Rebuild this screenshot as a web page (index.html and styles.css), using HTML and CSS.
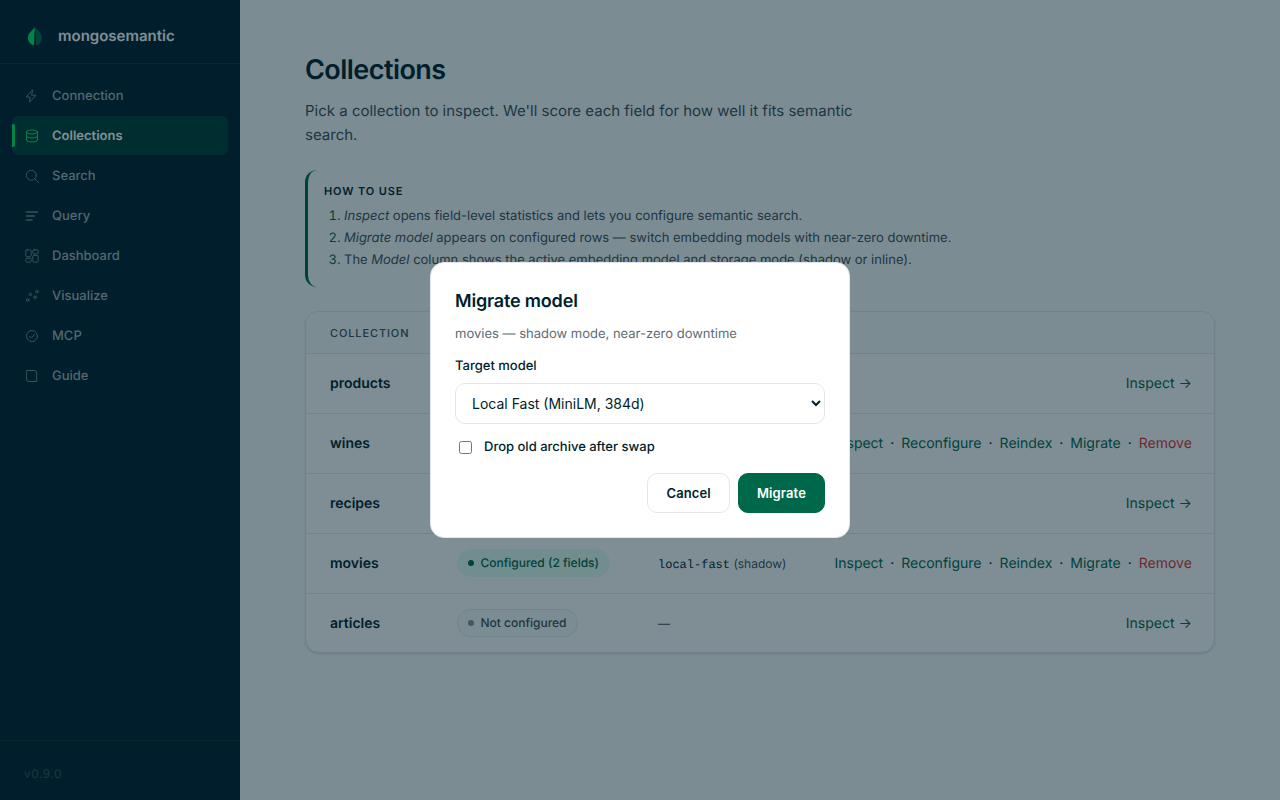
FILE: index.html
```html
<!DOCTYPE html>
<html lang="en">
<head>
<meta charset="utf-8">
<meta name="viewport" content="width=device-width, initial-scale=1">
<title>Collections – mongosemantic</title>
<link rel="stylesheet" href="styles.css">
</head>
<body>
<div class="app">
  <aside class="sidebar">
    <div class="brand">
      <svg class="brand-mark" viewBox="0 0 22 22" aria-hidden="true">
        <path d="M11 2C10.500 4 4 7 4 13c0 4 2.800 6.500 6 7.400L10.400 10z" fill="#00ed64"/>
        <path d="M11 2c.5 2 7 5 7 11 0 4-2.800 6.500-6 7.400L11.600 10z" fill="#00684a"/>
      </svg>
      <span class="brand-name">mongosemantic</span>
    </div>
    <nav class="nav">
      <a href="#" class="nav-item"><svg class="icon" viewBox="0 0 16 16"><path d="M8.500 2 2.200 9h4l-.8 5.200L12 7.200H8z"/></svg>Connection</a>
      <a href="#" class="nav-item active" aria-current="page"><svg class="icon" viewBox="0 0 16 16"><ellipse cx="8" cy="4" rx="5.500" ry="2"/><path d="M2.500 4v8c0 1.100 2.500 2 5.500 2s5.500-.9 5.500-2V4M2.500 8c0 1.100 2.500 2 5.500 2s5.500-.9 5.500-2"/></svg>Collections</a>
      <a href="#" class="nav-item"><svg class="icon" viewBox="0 0 16 16"><circle cx="7.300" cy="7.300" r="5"/><path d="m11 11 3.500 3.500"/></svg>Search</a>
      <a href="#" class="nav-item"><svg class="icon" viewBox="0 0 16 16"><path stroke-width="1.500" d="M2.500 4h11M2.500 8h8M2.500 12h5.500"/></svg>Query</a>
      <a href="#" class="nav-item"><svg class="icon" viewBox="0 0 16 16"><rect x="1.800" y="1.800" width="5.400" height="7" rx="1.400"/><rect x="8.800" y="1.800" width="5.400" height="4.200" rx="1.400"/><rect x="1.800" y="10.200" width="5.400" height="4" rx="1.400"/><rect x="8.800" y="7.400" width="5.400" height="6.800" rx="1.400"/></svg>Dashboard</a>
      <a href="#" class="nav-item"><svg class="icon" viewBox="0 0 16 16"><circle cx="3.700" cy="12" r="1.300"/><circle cx="6.400" cy="6.400" r="1.300"/><circle cx="11" cy="9.200" r="1.300"/><circle cx="12.800" cy="3.600" r="1.300"/></svg>Visualize</a>
      <a href="#" class="nav-item"><svg class="icon" viewBox="0 0 16 16"><circle cx="8" cy="8" r="5.500"/><path d="m5.500 8.200 1.800 1.800 3.400-3.600"/></svg>MCP</a>
      <a href="#" class="nav-item"><svg class="icon" viewBox="0 0 16 16"><path d="M2.500 2.500h7.700a2.500 2.500 0 0 1 2.500 2.500v8.500H5A2.500 2.500 0 0 1 2.500 11z"/></svg>Guide</a>
    </nav>
    <div class="version">v0.9.0</div>
  </aside>

  <main class="main">
    <div class="content">
      <h1 class="title">Collections</h1>
      <p class="lead">Pick a collection to inspect. We'll score each field for how well it fits semantic search.</p>

      <section class="howto">
        <h2 class="howto-title">How to use</h2>
        <ol class="howto-list">
          <li><em>Inspect</em> opens field-level statistics and lets you configure semantic search.</li>
          <li><em>Migrate model</em> appears on configured rows — switch embedding models with near-zero downtime.</li>
          <li>The <em>Model</em> column shows the active embedding model and storage mode (shadow or inline).</li>
        </ol>
      </section>

      <div class="card">
        <table class="table">
          <thead>
            <tr><th class="col-name">Collection</th><th class="col-status">Status</th><th class="col-model">Model</th><th></th></tr>
          </thead>
          <tbody>
            <tr>
              <td class="name">products</td>
              <td><span class="pill">Not configured</span></td>
              <td class="model">—</td>
              <td class="actions"><a href="#">Inspect →</a></td>
            </tr>
            <tr>
              <td class="name">wines</td>
              <td><span class="pill ok">Configured (2 fields)</span></td>
              <td class="model"><code>local-fast</code> (shadow)</td>
              <td class="actions"><a href="#">Inspect</a><span class="dot">·</span><a href="#">Reconfigure</a><span class="dot">·</span><a href="#">Reindex</a><span class="dot">·</span><a href="#">Migrate</a><span class="dot">·</span><a href="#" class="danger">Remove</a></td>
            </tr>
            <tr>
              <td class="name">recipes</td>
              <td><span class="pill">Not configured</span></td>
              <td class="model">—</td>
              <td class="actions"><a href="#">Inspect →</a></td>
            </tr>
            <tr>
              <td class="name">movies</td>
              <td><span class="pill ok">Configured (2 fields)</span></td>
              <td class="model"><code>local-fast</code> (shadow)</td>
              <td class="actions"><a href="#">Inspect</a><span class="dot">·</span><a href="#">Reconfigure</a><span class="dot">·</span><a href="#">Reindex</a><span class="dot">·</span><a href="#">Migrate</a><span class="dot">·</span><a href="#" class="danger">Remove</a></td>
            </tr>
            <tr>
              <td class="name">articles</td>
              <td><span class="pill">Not configured</span></td>
              <td class="model">—</td>
              <td class="actions"><a href="#">Inspect →</a></td>
            </tr>
          </tbody>
        </table>
      </div>
    </div>
  </main>
</div>

<div class="overlay">
  <form class="modal" role="dialog" aria-modal="true" aria-labelledby="modal-title">
    <h2 class="modal-title" id="modal-title">Migrate model</h2>
    <p class="modal-sub">movies — shadow mode, near-zero downtime</p>
    <label class="label" for="target">Target model</label>
    <select class="select" id="target">
      <option>Local Fast (MiniLM, 384d)</option>
    </select>
    <label class="check"><input type="checkbox">Drop old archive after swap</label>
    <div class="modal-actions">
      <button type="button" class="btn">Cancel</button>
      <button type="button" class="btn primary">Migrate</button>
    </div>
  </form>
</div>
</body>
</html>
```

FILE: styles.css
```css
* { box-sizing: border-box; }

body {
  margin: 0;
  font-family: Inter, "Liberation Sans", sans-serif;
  font-size: 14px;
  line-height: 24px;
  color: #001e2b;
  background: #f9fbfa;
  text-rendering: geometricPrecision;
}

h1, h2, p, ol { margin: 0; }
a { color: inherit; text-decoration: none; }

.app {
  display: flex;
  min-height: 100vh;
}

.sidebar {
  flex: 0 0 240px;
  display: flex;
  flex-direction: column;
  background: #001e2b;
}

.brand {
  display: flex;
  align-items: center;
  gap: 12px;
  padding: 24px 24px 16px;
  border-bottom: 1px solid #14303c;
  height: 64px;
}
.brand-mark { width: 22px; height: 22px; }
.brand-name {
  font-size: 15px;
  font-weight: 600;
  line-height: 22px;
  color: #fff;
}

.nav {
  display: flex;
  flex-direction: column;
  gap: 1px;
  padding: 12px;
}
.nav-item {
  position: relative;
  display: flex;
  align-items: center;
  gap: 12px;
  padding: 10px 12px 9px;
  border-radius: 6px;
  font-size: 13px;
  font-weight: 500;
  line-height: 20px;
  color: #a6b1b5;
}
.nav-item.active {
  color: #fff;
  font-weight: 600;
  background: #003d32;
}
.nav-item.active::before {
  content: "";
  position: absolute;
  left: 0;
  top: 8px;
  bottom: 8px;
  width: 3px;
  border-radius: 0 2px 2px 0;
  background: #00ed64;
}
.icon {
  width: 16px;
  height: 16px;
  fill: none;
  stroke: currentColor;
  stroke-width: 1;
  stroke-linecap: round;
  stroke-linejoin: round;
  opacity: 0.7;
}
.nav-item.active .icon { stroke: #00ed64; opacity: 1; }

.version {
  margin-top: auto;
  padding: 21px 24px 14px;
  border-top: 1px solid #0c322f;
  font-size: 12px;
  letter-spacing: 0.04em;
  color: #3d4f58;
}

.main {
  flex: 1;
  min-width: 0;
  padding: 52px 48px 48px;
}
.content {
  max-width: 910px;
  margin: 0 auto;
}

.title {
  font-size: 27px;
  font-weight: 600;
  line-height: 36px;
  letter-spacing: -0.02em;
}
.lead {
  max-width: 560px;
  margin-top: 11px;
  font-size: 15px;
  color: #3d4f58;
}

.howto {
  margin-top: 23px;
  padding: 12px 16px 16px;
  border-left: 3px solid #00684a;
  border-radius: 12px;
}
.howto-title {
  font-size: 11px;
  font-weight: 600;
  line-height: 18px;
  letter-spacing: 0.08em;
  text-transform: uppercase;
}
.howto-list {
  margin-top: 5px;
  padding-left: 20px;
  font-size: 13px;
  line-height: 22px;
  color: #3d4f58;
}
.howto-list ::marker { color: #00684a; }

.card {
  margin-top: 24px;
  border: 1px solid #e1e7ea;
  border-radius: 14px;
  background: #fff;
  box-shadow: 0 1px 2px rgba(0, 30, 43, 0.16);
  overflow: hidden;
}
.table {
  width: 100%;
  border-collapse: collapse;
}
.table th {
  height: 41px;
  padding: 2px 24px 0;
  font-size: 11px;
  font-weight: 500;
  letter-spacing: 0.08em;
  text-align: left;
  text-transform: uppercase;
  color: #3d4f58;
  background: #f9fbfa;
}
.table th, .table td { border-bottom: 1px solid #e1e7ea; }
.table tr:last-child td { border-bottom: 0; }
.table td {
  height: 60px;
  padding: 0 24px;
}
.table tr:last-child td { height: 59px; }
.table .col-name { width: 127px; }
.table .name,
.table .model,
.table .actions { padding-top: 2px; }
.name { font-weight: 600; }
.model {
  font-size: 12px;
  color: #3d4f58;
  white-space: nowrap;
}
.model code {
  font-family: "Liberation Mono", monospace;
  font-size: 12px;
  color: #001e2b;
}
.pill {
  display: inline-flex;
  align-items: center;
  gap: 6px;
  padding: 1px 10px;
  border: 1px solid #e1e7ea;
  border-radius: 14px;
  font-size: 12px;
  font-weight: 500;
  color: #3d4f58;
  background: #f9fbfa;
  white-space: nowrap;
}
.pill::before {
  content: "";
  width: 6px;
  height: 6px;
  border-radius: 50%;
  background: #889397;
}
.pill.ok { color: #00684a; background: #e3fcf0; border-color: #e3fcf0; }
.pill.ok::before { background: #00684a; }
.actions {
  text-align: right;
  white-space: nowrap;
  color: #00684a;
}
.dot { margin: 0 7px; color: #001e2b; }
.danger { color: #db3030; }

.overlay {
  position: fixed;
  inset: 0;
  display: flex;
  align-items: center;
  justify-content: center;
  background: rgba(0, 30, 43, 0.5);
}
.modal {
  display: flex;
  flex-direction: column;
  width: 420px;
  padding: 24px;
  border: 1px solid #e1e7ea;
  border-radius: 14px;
  background: #fff;
}
.modal-title {
  font-size: 18px;
  font-weight: 600;
  line-height: 30px;
  letter-spacing: -0.01em;
}
.modal-sub {
  margin-top: 6px;
  font-size: 13px;
  line-height: 22px;
  color: #5c6c75;
}
.label {
  margin-top: 10px;
  font-size: 13px;
  font-weight: 500;
  line-height: 22px;
}
.select {
  height: 41px;
  margin-top: 6px;
  padding: 0 12px;
  border: 1px solid #e1e7ea;
  border-radius: 10px;
  font: inherit;
  color: inherit;
  background: #fff;
}
.check {
  display: flex;
  align-items: center;
  gap: 12px;
  margin-top: 12px;
  font-size: 13px;
  font-weight: 500;
  line-height: 22px;
}
.check input { width: 13px; height: 13px; margin: 0 0 0 4px; }
.modal-actions {
  display: flex;
  justify-content: flex-end;
  gap: 8px;
  margin-top: 15px;
}
.btn {
  padding: 8px 18px;
  border: 1px solid #e1e7ea;
  border-radius: 10px;
  font: inherit;
  font-size: 13px;
  font-weight: 600;
  line-height: 22px;
  letter-spacing: 0.01em;
  color: inherit;
  background: #fff;
}
.btn.primary {
  color: #fff;
  background: #00684a;
  border-color: #00684a;
}
```
